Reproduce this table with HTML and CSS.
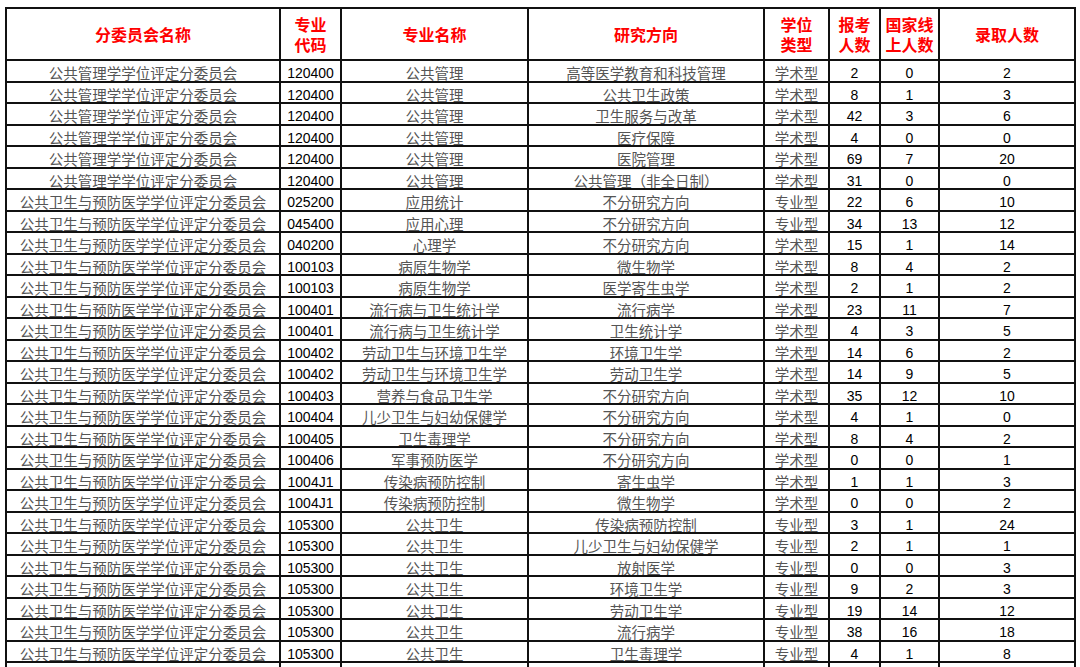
FILE: index.html
```html
<!DOCTYPE html>
<html lang="zh-CN">
<head>
<meta charset="utf-8">
<title>录取人数</title>
<link rel="stylesheet" href="styles.css">
</head>
<body>
<div class="sheet">
  <div class="h">分委员会名称</div><div class="h">专业<br>代码</div><div class="h">专业名称</div><div class="h">研究方向</div><div class="h">学位<br>类型</div><div class="h">报考<br>人数</div><div class="h">国家线<br>上人数</div><div class="h">录取人数</div>

  <div class="c">公共管理学学位评定分委员会</div><div class="n">120400</div><div class="c">公共管理</div><div class="c">高等医学教育和科技管理</div><div class="c">学术型</div><div class="n">2</div><div class="n">0</div><div class="n">2</div>
  <div class="c">公共管理学学位评定分委员会</div><div class="n">120400</div><div class="c">公共管理</div><div class="c">公共卫生政策</div><div class="c">学术型</div><div class="n">8</div><div class="n">1</div><div class="n">3</div>
  <div class="c">公共管理学学位评定分委员会</div><div class="n">120400</div><div class="c">公共管理</div><div class="c">卫生服务与改革</div><div class="c">学术型</div><div class="n">42</div><div class="n">3</div><div class="n">6</div>
  <div class="c">公共管理学学位评定分委员会</div><div class="n">120400</div><div class="c">公共管理</div><div class="c">医疗保障</div><div class="c">学术型</div><div class="n">4</div><div class="n">0</div><div class="n">0</div>
  <div class="c">公共管理学学位评定分委员会</div><div class="n">120400</div><div class="c">公共管理</div><div class="c">医院管理</div><div class="c">学术型</div><div class="n">69</div><div class="n">7</div><div class="n">20</div>
  <div class="c">公共管理学学位评定分委员会</div><div class="n">120400</div><div class="c">公共管理</div><div class="c">公共管理（非全日制）</div><div class="c">学术型</div><div class="n">31</div><div class="n">0</div><div class="n">0</div>
  <div class="c">公共卫生与预防医学学位评定分委员会</div><div class="n">025200</div><div class="c">应用统计</div><div class="c">不分研究方向</div><div class="c">专业型</div><div class="n">22</div><div class="n">6</div><div class="n">10</div>
  <div class="c">公共卫生与预防医学学位评定分委员会</div><div class="n">045400</div><div class="c">应用心理</div><div class="c">不分研究方向</div><div class="c">专业型</div><div class="n">34</div><div class="n">13</div><div class="n">12</div>
  <div class="c">公共卫生与预防医学学位评定分委员会</div><div class="n">040200</div><div class="c">心理学</div><div class="c">不分研究方向</div><div class="c">学术型</div><div class="n">15</div><div class="n">1</div><div class="n">14</div>
  <div class="c">公共卫生与预防医学学位评定分委员会</div><div class="n">100103</div><div class="c">病原生物学</div><div class="c">微生物学</div><div class="c">学术型</div><div class="n">8</div><div class="n">4</div><div class="n">2</div>
  <div class="c">公共卫生与预防医学学位评定分委员会</div><div class="n">100103</div><div class="c">病原生物学</div><div class="c">医学寄生虫学</div><div class="c">学术型</div><div class="n">2</div><div class="n">1</div><div class="n">2</div>
  <div class="c">公共卫生与预防医学学位评定分委员会</div><div class="n">100401</div><div class="c">流行病与卫生统计学</div><div class="c">流行病学</div><div class="c">学术型</div><div class="n">23</div><div class="n">11</div><div class="n">7</div>
  <div class="c">公共卫生与预防医学学位评定分委员会</div><div class="n">100401</div><div class="c">流行病与卫生统计学</div><div class="c">卫生统计学</div><div class="c">学术型</div><div class="n">4</div><div class="n">3</div><div class="n">5</div>
  <div class="c">公共卫生与预防医学学位评定分委员会</div><div class="n">100402</div><div class="c">劳动卫生与环境卫生学</div><div class="c">环境卫生学</div><div class="c">学术型</div><div class="n">14</div><div class="n">6</div><div class="n">2</div>
  <div class="c">公共卫生与预防医学学位评定分委员会</div><div class="n">100402</div><div class="c">劳动卫生与环境卫生学</div><div class="c">劳动卫生学</div><div class="c">学术型</div><div class="n">14</div><div class="n">9</div><div class="n">5</div>
  <div class="c">公共卫生与预防医学学位评定分委员会</div><div class="n">100403</div><div class="c">营养与食品卫生学</div><div class="c">不分研究方向</div><div class="c">学术型</div><div class="n">35</div><div class="n">12</div><div class="n">10</div>
  <div class="c">公共卫生与预防医学学位评定分委员会</div><div class="n">100404</div><div class="c">儿少卫生与妇幼保健学</div><div class="c">不分研究方向</div><div class="c">学术型</div><div class="n">4</div><div class="n">1</div><div class="n">0</div>
  <div class="c">公共卫生与预防医学学位评定分委员会</div><div class="n">100405</div><div class="c">卫生毒理学</div><div class="c">不分研究方向</div><div class="c">学术型</div><div class="n">8</div><div class="n">4</div><div class="n">2</div>
  <div class="c">公共卫生与预防医学学位评定分委员会</div><div class="n">100406</div><div class="c">军事预防医学</div><div class="c">不分研究方向</div><div class="c">学术型</div><div class="n">0</div><div class="n">0</div><div class="n">1</div>
  <div class="c">公共卫生与预防医学学位评定分委员会</div><div class="n">1004J1</div><div class="c">传染病预防控制</div><div class="c">寄生虫学</div><div class="c">学术型</div><div class="n">1</div><div class="n">1</div><div class="n">3</div>
  <div class="c">公共卫生与预防医学学位评定分委员会</div><div class="n">1004J1</div><div class="c">传染病预防控制</div><div class="c">微生物学</div><div class="c">学术型</div><div class="n">0</div><div class="n">0</div><div class="n">2</div>
  <div class="c">公共卫生与预防医学学位评定分委员会</div><div class="n">105300</div><div class="c">公共卫生</div><div class="c">传染病预防控制</div><div class="c">专业型</div><div class="n">3</div><div class="n">1</div><div class="n">24</div>
  <div class="c">公共卫生与预防医学学位评定分委员会</div><div class="n">105300</div><div class="c">公共卫生</div><div class="c">儿少卫生与妇幼保健学</div><div class="c">专业型</div><div class="n">2</div><div class="n">1</div><div class="n">1</div>
  <div class="c">公共卫生与预防医学学位评定分委员会</div><div class="n">105300</div><div class="c">公共卫生</div><div class="c">放射医学</div><div class="c">专业型</div><div class="n">0</div><div class="n">0</div><div class="n">3</div>
  <div class="c">公共卫生与预防医学学位评定分委员会</div><div class="n">105300</div><div class="c">公共卫生</div><div class="c">环境卫生学</div><div class="c">专业型</div><div class="n">9</div><div class="n">2</div><div class="n">3</div>
  <div class="c">公共卫生与预防医学学位评定分委员会</div><div class="n">105300</div><div class="c">公共卫生</div><div class="c">劳动卫生学</div><div class="c">专业型</div><div class="n">19</div><div class="n">14</div><div class="n">12</div>
  <div class="c">公共卫生与预防医学学位评定分委员会</div><div class="n">105300</div><div class="c">公共卫生</div><div class="c">流行病学</div><div class="c">专业型</div><div class="n">38</div><div class="n">16</div><div class="n">18</div>
  <div class="c">公共卫生与预防医学学位评定分委员会</div><div class="n">105300</div><div class="c">公共卫生</div><div class="c">卫生毒理学</div><div class="c">专业型</div><div class="n">4</div><div class="n">1</div><div class="n">8</div>
  <div class="c"></div><div class="n"></div><div class="c"></div><div class="c"></div><div class="c"></div><div class="n"></div><div class="n"></div><div class="n"></div>
</div>
</body>
</html>
```

FILE: styles.css
```css
html, body {
  margin: 0;
  padding: 0;
  background: #fff;
  height: 667px;
  overflow: hidden;
}

body {
  padding: 7px 0 0 5px;
  box-sizing: border-box;
  font-family: "Liberation Sans", "Noto Sans CJK SC", sans-serif;
}

.sheet {
  display: grid;
  grid-template-columns: 274px 61px 187px 236px 65px 51px 59px 136px;
  grid-template-rows: 52px;
  grid-auto-rows: 21.5px;
  width: 1071px;
  box-sizing: border-box;
  border-right: 2px solid #111;
}

.sheet > div {
  box-sizing: border-box;
  border-left: 2px solid #111;
  border-top: 2px solid #111;
  text-align: center;
  white-space: nowrap;
  isolation: isolate;
  background: transparent;
}

.h {
  display: flex;
  align-items: center;
  justify-content: center;
  color: #ff0000;
  font-family: "Liberation Sans", "Noto Sans CJK SC", sans-serif;
  font-weight: 700;
  font-size: 16px;
  line-height: 20px;
  padding-top: 4px;
}

.c {
  color: #555;
  font-size: 14.5px;
  line-height: 19.5px;
  padding-top: 4px;
}

.n {
  color: #000;
  font-size: 14px;
  line-height: 19.5px;
  padding-top: 3px;
}
```
